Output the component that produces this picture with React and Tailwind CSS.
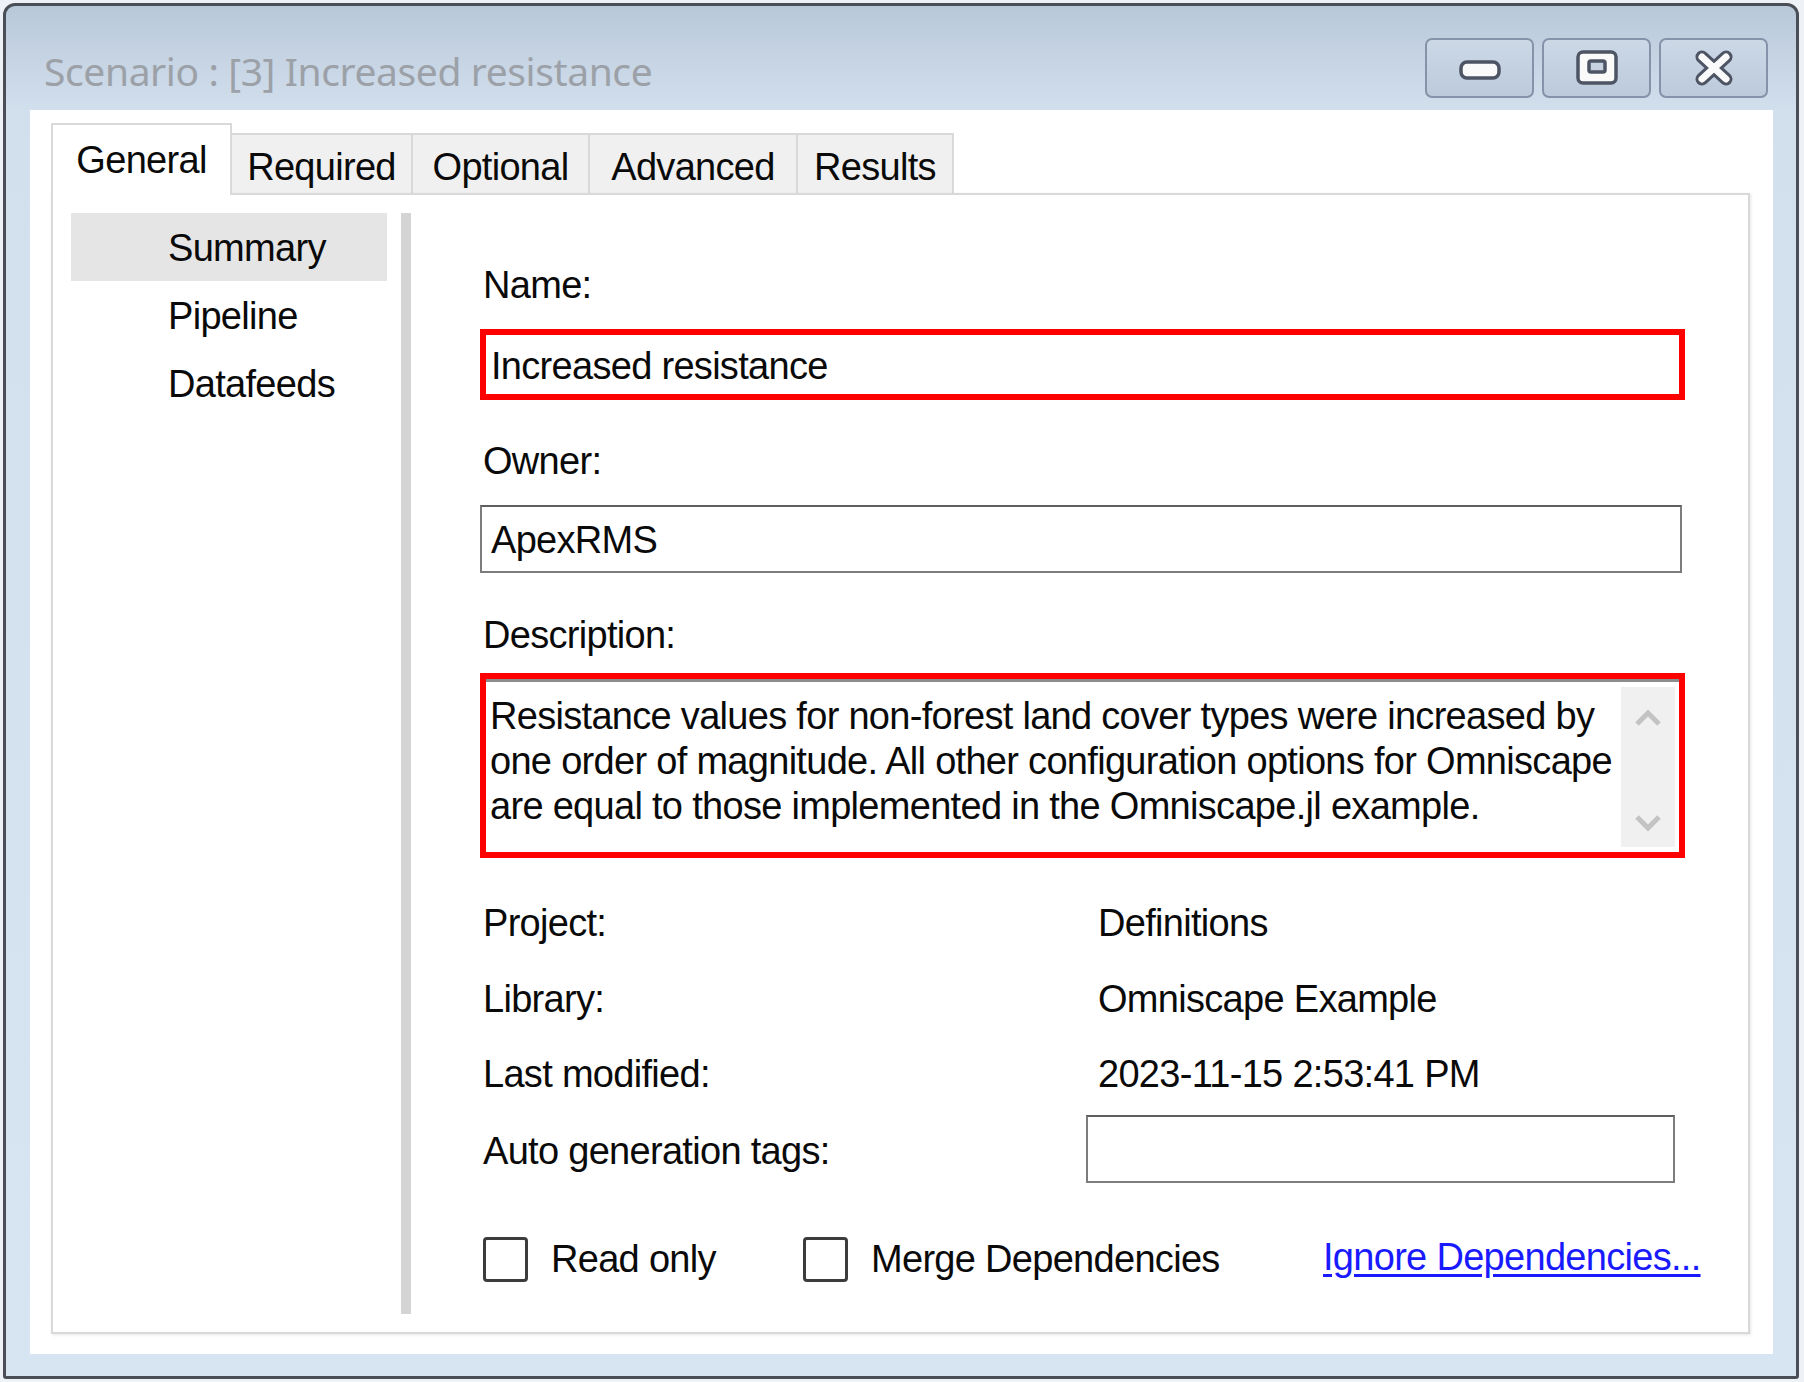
import React from 'react';

const tabs = [
  { name: 'General', w: 'w-[181px]', active: true },
  { name: 'Required', w: 'w-[181px]' },
  { name: 'Optional', w: 'w-[177px]' },
  { name: 'Advanced', w: 'w-[208px]' },
  { name: 'Results', w: 'w-[156px]' },
];

const navItems = ['Summary', 'Pipeline', 'Datafeeds'];

const info = [
  { label: 'Project:', value: 'Definitions', mt: 'mt-[43px]' },
  { label: 'Library:', value: 'Omniscape Example', mt: 'mt-[31px]' },
  { label: 'Last modified:', value: '2023-11-15 2:53:41 PM', mt: 'mt-[30px]' },
];

const TitleButton = ({ children }) => (
  <div className="w-[109px] h-[60px] rounded-[7px] border-2 border-[#8592a9] bg-[linear-gradient(to_bottom,#ccd8e6,#bccadb)] flex items-center justify-center">
    {children}
  </div>
);

const Checkbox = ({ label }) => (
  <div className="flex items-center gap-[23px]">
    <div className="w-[45px] h-[45px] shrink-0 rounded-[4px] border-[3px] border-[#3c3c3c] bg-white" />
    <span>{label}</span>
  </div>
);

const App = () => {
  return (
    <div className="w-[1804px] h-[1382px] bg-[#eef2f7] pt-[3px] pl-[3px] pr-[5px] pb-[3px]">
      <div className="h-full flex flex-col rounded-t-[12px] rounded-b-[3px] border-[3px] border-[#4a4f57] bg-[linear-gradient(to_bottom,#b9c8d9_0px,#d2dfed_106px,#d7e4f2_100%)]">
        {/* title bar */}
        <div className="h-[104px] flex items-start justify-between">
          <div className="ml-[38px] mt-[42px] leading-[45px] text-[39px] text-[#9ca1a8] font-['Noto_Sans',sans-serif] tracking-[-0.4px]">
            Scenario : [3] Increased resistance
          </div>
          <div className="mt-[32px] mr-[28px] flex gap-[8px]">
            <TitleButton>
              <svg width="44" height="36" viewBox="0 0 44 36">
                <rect x="3" y="12" width="38" height="16" rx="6" fill="#fafafa" stroke="#4d5463" strokeWidth="3.5" />
              </svg>
            </TitleButton>
            <TitleButton>
              <svg width="44" height="36" viewBox="0 0 44 36">
                <rect x="3" y="2" width="38" height="31" rx="5" fill="#fafafa" stroke="#4d5463" strokeWidth="3.5" />
                <rect x="14" y="11" width="16" height="11" rx="2" fill="#c6d2e0" stroke="#4d5463" strokeWidth="3.5" />
              </svg>
            </TitleButton>
            <TitleButton>
              <svg width="44" height="36" viewBox="0 0 44 36">
                <path d="M10 7 L34 29 M34 7 L10 29" stroke="#4d5463" strokeWidth="13" strokeLinecap="round" />
                <path d="M10 7 L34 29 M34 7 L10 29" stroke="#fafafa" strokeWidth="7" strokeLinecap="round" />
              </svg>
            </TitleButton>
          </div>
        </div>

        {/* client area */}
        <div className="flex-1 ml-[24px] mr-[23px] mb-[22px] bg-white pt-[13px] pl-[21px] pr-[23px] pb-[20px] flex flex-col font-['Liberation_Sans',Arial,sans-serif] text-[38px] tracking-[-0.7px] text-[#0a0a0a] leading-[45px]">
          {/* tab strip */}
          <div className="h-[70px] flex items-end">
            {tabs.map((t) =>
              t.active ? (
                <div
                  key={t.name}
                  className={`${t.w} h-[72px] -mb-[2px] relative z-10 bg-white border-2 border-b-0 border-[#d9d9d9] flex justify-center pt-[13px]`}
                >
                  {t.name}
                </div>
              ) : (
                <div
                  key={t.name}
                  className={`${t.w} h-[60px] bg-[#f0f0f0] border-2 border-b-0 border-l-0 border-[#d9d9d9] flex justify-center pt-[10px]`}
                >
                  {t.name}
                </div>
              )
            )}
          </div>

          {/* tab page */}
          <div className="flex-1 flex border-2 border-[#d9d9d9] shadow-[1px_1px_3px_rgba(0,0,0,0.10)] pt-[18px] pl-[18px]">
            <div className="w-[316px] flex flex-col">
              {navItems.map((n, i) => (
                <div key={n} className={`h-[68px] pl-[97px] pt-[2px] flex items-center ${i === 0 ? 'bg-[#e5e5e5]' : ''}`}>
                  {n}
                </div>
              ))}
            </div>
            <div className="ml-[14px] w-[10px] mb-[18px] bg-[#d4d4d4]" />

            <div className="ml-[69px] w-[1205px] pt-[50px] flex flex-col">
              <div className="pl-[3px]">Name:</div>
              <div className="mt-[21px] h-[71px] border-[6px] border-[#ff0000] flex items-center pl-[5px] pt-[3px]">
                Increased resistance
              </div>

              <div className="mt-[39px] pl-[3px]">Owner:</div>
              <div className="mt-[21px] w-[1202px] h-[68px] border-2 border-[#7d7d7d] border-t-[#5f5f5f] flex items-center pl-[9px] pt-[3px]">
                ApexRMS
              </div>

              <div className="mt-[40px] pl-[3px]">Description:</div>
              <div className="mt-[15px] h-[185px] border-[6px] border-[#ff0000]">
                <div className="h-full flex border-t-[3px] border-[#8c8c8c]">
                  <div className="flex-1 pt-[12px] pl-[4px]">
                    <div>Resistance values for non-forest land cover types were increased by</div>
                    <div>one order of magnitude. All other configuration options for Omniscape</div>
                    <div>are equal to those implemented in the Omniscape.jl example.</div>
                  </div>
                  <div className="w-[54px] mt-[5px] mb-[5px] mr-[4px] bg-[#f0f0f0] flex flex-col items-center justify-between pt-[22px] pb-[15px]">
                    <svg width="28" height="18" viewBox="0 0 28 18">
                      <path d="M3 15 L14 4 L25 15" fill="none" stroke="#c3c3c3" strokeWidth="5" />
                    </svg>
                    <svg width="28" height="18" viewBox="0 0 28 18">
                      <path d="M3 3 L14 14 L25 3" fill="none" stroke="#c3c3c3" strokeWidth="5" />
                    </svg>
                  </div>
                </div>
              </div>

              {info.map((r) => (
                <div key={r.label} className={`${r.mt} grid grid-cols-[606px_1fr]`}>
                  <div className="pl-[3px]">{r.label}</div>
                  <div className="pl-[12px]">{r.value}</div>
                </div>
              ))}

              <div className="mt-[18px] grid grid-cols-[606px_1fr] items-center">
                <div className="pl-[3px] pt-[4px]">Auto generation tags:</div>
                <div className="w-[589px] h-[68px] border-2 border-[#7d7d7d] border-t-[#5f5f5f]" />
              </div>

              <div className="mt-[54px] h-[45px] flex items-center whitespace-nowrap">
                <div className="w-[323px] shrink-0 pl-[3px]">
                  <Checkbox label="Read only" />
                </div>
                <div className="w-[517px] shrink-0">
                  <Checkbox label="Merge Dependencies" />
                </div>
                <a className="shrink-0 pl-[3px] -mt-[5px] text-[#1a1aff] underline underline-offset-[4px] cursor-pointer">
                  Ignore Dependencies...
                </a>
              </div>
            </div>
          </div>
        </div>
      </div>
    </div>
  );
};

export default App;
